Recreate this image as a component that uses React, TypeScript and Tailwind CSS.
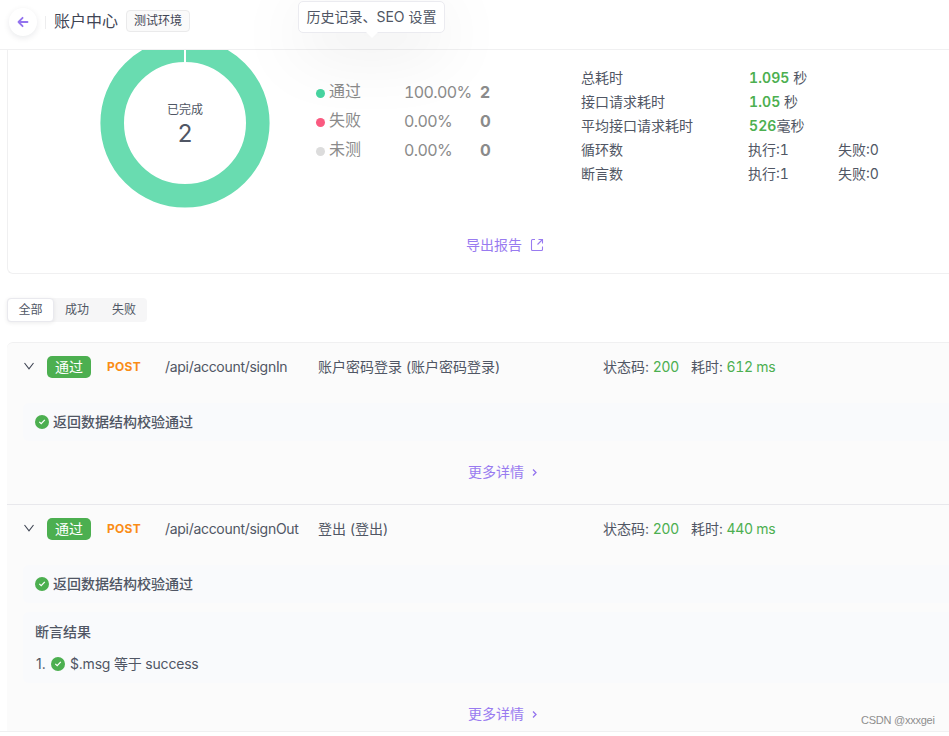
import { ReactNode } from "react"

const legend = [
  { label: "通过", percent: "100.00%", count: 2, dot: "bg-[#47d4a0]" },
  { label: "失败", percent: "0.00%", count: 0, dot: "bg-[#fa5a80]" },
  { label: "未测", percent: "0.00%", count: 0, dot: "bg-[#dcdcdc]" },
]

const timings = [
  { label: "总耗时", value: "1.095", unit: " 秒" },
  { label: "接口请求耗时", value: "1.05", unit: " 秒" },
  { label: "平均接口请求耗时", value: "526", unit: "毫秒" },
]

const counters = ["循环数", "断言数"]

function CheckIcon() {
  return (
    <svg className="h-3.5 w-3.5 shrink-0" viewBox="0 0 14 14" fill="none">
      <circle cx="7" cy="7" r="7" fill="#4caf50" />
      <path d="M4.3 6.8l1.9 1.9 3.6-3.9" stroke="#fff" strokeWidth="1.2" />
    </svg>
  )
}

function Header() {
  return (
    <header className="flex h-[50px] items-start border-b border-[#f0f0f1] bg-white pl-[9px]">
      <button className="mt-2 flex h-7 w-7 items-center justify-center rounded-full bg-white shadow-[0_2px_6px_rgba(16,24,40,0.09)]">
        <svg className="h-3 w-3" viewBox="0 0 12 12" fill="none" stroke="#9373ee" strokeWidth="1.8">
          <path d="M10.500 6H1.5M5.600 1.800L1.500 6l4.100 4.200" strokeLinejoin="round" strokeLinecap="round" />
        </svg>
      </button>
      <div className="mt-4 ml-2 h-[13px] w-px bg-[#ededee]" />
      <h1 className="mt-[9px] ml-2 text-[16px] leading-6 text-[#3f4554]">账户中心</h1>
      <span className="mt-[10px] ml-2 flex h-[22px] w-16 items-center justify-center rounded-[4px] border border-[#eaeaeb] bg-[#fafafa] text-xs text-[#3f4554]">
        测试环境
      </span>
    </header>
  )
}

function Tooltip() {
  return (
    <div className="absolute top-px left-[298px] flex h-8 w-[147px] items-center justify-center rounded-[5px] border border-[#ebebf0] bg-white text-sm whitespace-nowrap shadow-[0_16px_70px_rgba(0,0,0,0.1)]">
      历史记录、SEO 设置
      <svg className="absolute top-[30px] left-[67px] h-[7px] w-3" viewBox="0 0 12 7">
        <path d="M0 0h12L6 6z" fill="#fff" />
      </svg>
    </div>
  )
}

function Donut() {
  return (
    <div className="relative -mt-3 ml-[92px] h-[170px] w-[170px] shrink-0">
      <svg className="h-full w-full" viewBox="0 0 170 170" fill="none">
        <circle cx="85" cy="85" r="72.8" stroke="#69dcb0" strokeWidth="23.6" />
        <path d="M85 0v25" stroke="#fff" strokeWidth="2" />
      </svg>
      <div className="absolute inset-0 flex flex-col items-center pt-16">
        <span className="text-xs leading-4">已完成</span>
        <span className="text-2xl leading-8">2</span>
      </div>
    </div>
  )
}

function Report() {
  return (
    <section className="ml-[7px] h-56 overflow-hidden rounded-bl-md border-b border-l border-[#f0f0f1]">
      <div className="flex h-[185px] items-start">
        <Donut />
        <ul className="mt-[27px] ml-[46px] w-[200px] text-base text-[#8b8b8b]">
          {legend.map((item) => (
            <li key={item.label} className="flex h-[29px] items-center">
              <i className={`mt-[3px] h-[9px] w-[9px] rounded-full ${item.dot}`} />
              <span className="ml-1 w-[75px] pb-px">{item.label}</span>
              <span className="w-[76px] tracking-[-0.6px] tabular-nums">{item.percent}</span>
              <b className="tracking-[-0.2px]">{item.count}</b>
            </li>
          ))}
        </ul>
        <div className="mt-4 ml-[65px] text-sm leading-6 tabular-nums">
          {timings.map((item) => (
            <div key={item.label} className="flex">
              <span className="w-[168px]">{item.label}</span>
              <span className="whitespace-pre">
                <b className="font-semibold tracking-[0.1px] text-[#4caf50]">{item.value}</b>
                {item.unit}
              </span>
            </div>
          ))}
          {counters.map((label) => (
            <div key={label} className="flex">
              <span className="w-[167px]">{label}</span>
              <span className="w-[90px]">执行:1</span>
              <span>失败:0</span>
            </div>
          ))}
        </div>
      </div>
      <a className="ml-[458px] flex h-5 items-center text-sm text-[#997bf0]">
        导出报告
        <svg className="ml-2 h-3.5 w-3.5" viewBox="0 0 14 14" fill="none" stroke="#997bf0" strokeWidth="1.1">
          <path d="M5 1.5H2.5a1 1 0 0 0-1 1v9a1 1 0 0 0 1 1h9a1 1 0 0 0 1-1V8.500M8.500 1.500h4v4M12.500 1.500L7.500 6.500" />
        </svg>
      </a>
    </section>
  )
}

function Tabs() {
  return (
    <div className="mt-6 ml-[7px] flex h-6 w-[140px] rounded-[4px] bg-[#f6f6f7] text-xs">
      <button className="w-[47px] shrink-0 rounded-[4px] border border-[#e9e9ee] bg-white shadow-[0_1px_4px_rgba(0,0,0,0.08)]">全部</button>
      <button className="w-[46px] shrink-0">成功</button>
      <button className="w-[47px] shrink-0 pl-px">失败</button>
    </div>
  )
}

type CaseProps = { path: string; name: string; time: string; className: string; children?: ReactNode }

function CaseItem({ path, name, time, className, children }: CaseProps) {
  return (
    <article className={`border-t bg-[#fbfbfb] text-sm ${className}`}>
      <div className="flex h-[60px] items-start pt-[13px] pl-4">
        <svg className="mt-1 h-3 w-3" viewBox="0 0 12 12" fill="none" stroke="#3f4554" strokeWidth="1.1">
          <path d="M1.500 3L6 8.800 10.500 3" />
        </svg>
        <span className="ml-3 flex h-[22px] w-11 items-center justify-center rounded-[5px] bg-[#4caf50] text-white">通过</span>
        <span className="ml-4 w-[58px] text-xs leading-[22px] font-bold tracking-[0.3px] text-[#fa8c16]">POST</span>
        <span className="w-[153px] leading-[22px] tracking-[-0.3px]">{path}</span>
        <span className="w-[285px] leading-[22px]">{name}</span>
        <span className="w-[88px] leading-[22px]">
          状态码: <span className="tracking-[-0.1px] text-[#4caf50]">200</span>
        </span>
        <span className="leading-[22px] tabular-nums">
          耗时: <span className="tracking-[-0.3px] text-[#4caf50]">{time}</span>
        </span>
      </div>
      <div className="ml-4 flex h-[38px] items-center gap-1 rounded-l-md bg-[#f9fafc] pl-3 font-medium">
        <CheckIcon />
        返回数据结构校验通过
      </div>
      {children}
      <a className="mt-5 ml-[461px] flex h-[22px] items-center text-[#997bf0]">
        更多详情
        <svg className="ml-2 h-[7px] w-[5px]" viewBox="0 0 5 7" fill="none" stroke="#9373ee" strokeWidth="1.3">
          <path d="M1 .5l3 3-3 3" />
        </svg>
      </a>
    </article>
  )
}

export default function App() {
  return (
    <div className="relative h-[736px] w-[949px] overflow-hidden bg-white font-[Inter,'Noto_Sans_CJK_SC',sans-serif] text-[#505664]">
      <Header />
      <Report />
      <Tabs />
      <main className="mt-5 border-b border-[#f0f0f1] pl-[7px]">
        <CaseItem
          path="/api/account/signIn"
          name="账户密码登录 (账户密码登录)"
          time="612 ms"
          className="h-[162px] rounded-tl-md border-[#f0f0f1]"
        />
        <CaseItem path="/api/account/signOut" name="登出 (登出)" time="440 ms" className="h-[227px] border-[#e8e8ec]">
          <div className="mt-[9px] ml-4 h-[71px] rounded-l-md bg-[#f9fafc] pt-[9px] pl-3">
            <div className="leading-[22px] font-medium">断言结果</div>
            <div className="mt-[10px] flex items-center leading-[22px]">
              <span className="w-4 pl-px">1.</span>
              <CheckIcon />
              <span className="ml-[5px] tracking-[-0.2px]">$.msg 等于 success</span>
            </div>
          </div>
        </CaseItem>
      </main>
      <Tooltip />
      <span className="absolute top-[712px] left-[861px] font-['Liberation_Sans',sans-serif] text-[11px] leading-4 tracking-[-0.25px] text-[#8e8e8e]">
        CSDN @xxxgei
      </span>
    </div>
  )
}
